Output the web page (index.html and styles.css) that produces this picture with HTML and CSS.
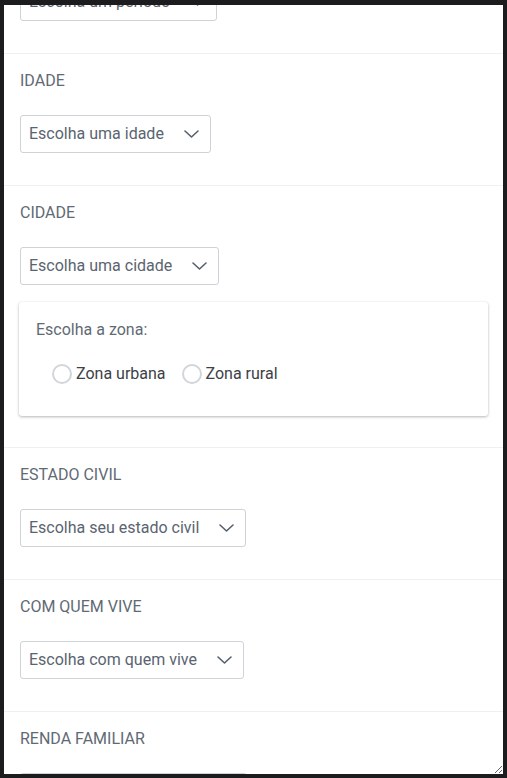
FILE: index.html
```html
<!DOCTYPE html>
<html lang="pt-BR">
<head>
<meta charset="utf-8">
<title>Formulário</title>
<link rel="stylesheet" href="styles.css">
</head>
<body>
<div class="panel">
  <div class="content">
    <section class="field">
      <div class="label">PERÍODO</div>
      <div class="select"><span>Escolha um período</span><svg class="chev" width="15" height="8" viewBox="0 0 15 8"><polyline points="1,1 7.5,7 14,1"/></svg></div>
    </section>
    <section class="field">
      <div class="label">IDADE</div>
      <div class="select"><span>Escolha uma idade</span><svg class="chev" width="15" height="8" viewBox="0 0 15 8"><polyline points="1,1 7.5,7 14,1"/></svg></div>
    </section>
    <section class="field">
      <div class="label">CIDADE</div>
      <div class="select"><span>Escolha uma cidade</span><svg class="chev" width="15" height="8" viewBox="0 0 15 8"><polyline points="1,1 7.5,7 14,1"/></svg></div>
      <div class="card">
        <div class="card-title">Escolha a zona:</div>
        <div class="radios">
          <label class="radio"><span class="circle"></span><span>Zona urbana</span></label>
          <label class="radio"><span class="circle"></span><span>Zona rural</span></label>
        </div>
      </div>
    </section>
    <section class="field">
      <div class="label">ESTADO CIVIL</div>
      <div class="select"><span>Escolha seu estado civil</span><svg class="chev" width="15" height="8" viewBox="0 0 15 8"><polyline points="1,1 7.5,7 14,1"/></svg></div>
    </section>
    <section class="field">
      <div class="label">COM QUEM VIVE</div>
      <div class="select"><span>Escolha com quem vive</span><svg class="chev" width="15" height="8" viewBox="0 0 15 8"><polyline points="1,1 7.5,7 14,1"/></svg></div>
    </section>
    <section class="field">
      <div class="label">RENDA FAMILIAR</div>
      <div class="select"><span>Escolha a renda familiar</span><svg class="chev" width="15" height="8" viewBox="0 0 15 8"><polyline points="1,1 7.5,7 14,1"/></svg></div>
    </section>
  </div>
</div>
</body>
</html>
```
FILE: styles.css
```css
html, body {
  margin: 0;
  padding: 0;
  background: #1c1c1e;
}
body {
  padding: 5px 4px 0 4px;
  font-family: Roboto, "Liberation Sans", sans-serif;
}
.panel {
  width: 499px;
  height: 769px;
  background: #ffffff;
  overflow: hidden;
  resize: both;
}
.content {
  margin-top: -83px;
}
.field {
  padding: 17px 16px 32px 16px;
  border-bottom: 1px solid #f0f0f0;
}
.label {
  font-size: 16px;
  line-height: 20px;
  color: #5f6a74;
  margin-bottom: 24px;
}
.select {
  display: inline-flex;
  align-items: center;
  box-sizing: border-box;
  height: 38px;
  padding: 0 11px 0 8px;
  border: 1px solid #cfd2d6;
  border-radius: 3px;
  font-size: 16px;
  line-height: 20px;
  color: #5a6470;
  gap: 20px;
}
.chev polyline {
  fill: none;
  stroke: #56606b;
  stroke-width: 1.6;
  stroke-linecap: round;
  stroke-linejoin: round;
}
.card {
  margin: 17px -1px -1px -1px;
  padding: 18px 17px 32px 17px;
  border-radius: 3px;
  background: #fff;
  box-shadow: 0 1px 3px rgba(0,0,0,0.28), 0 0 1px rgba(0,0,0,0.08);
}
.card-title {
  font-size: 16px;
  line-height: 20px;
  color: #5f6a74;
}
.radios {
  display: flex;
  gap: 16px;
  margin-top: 24px;
  padding-left: 16px;
}
.radio {
  display: flex;
  align-items: center;
  gap: 4px;
  font-size: 16px;
  line-height: 20px;
  color: #3c4147;
}
.circle {
  width: 16px;
  height: 16px;
  border: 2px solid #d2d5d9;
  border-radius: 50%;
}
```
